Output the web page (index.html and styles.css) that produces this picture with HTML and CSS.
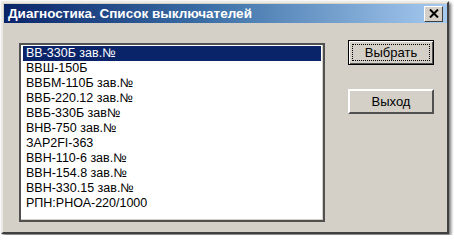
FILE: index.html
```html
<!DOCTYPE html>
<html lang="ru">
<head>
    <meta charset="UTF-8">
    <title>Диагностика. Список выключателей</title>
    <link rel="stylesheet" href="styles.css">
</head>
<body>
    <div class="window">
        <div class="titlebar">
            <span class="title">Диагностика. Список выключателей</span>
            <span class="close">
                <svg width="10" height="9" viewBox="0 0 10 9">
                    <path d="M1 0.5 L9 8.5 M9 0.5 L1 8.5" stroke="#000" stroke-width="2"/>
                </svg>
            </span>
        </div>
        <div class="content">
            <ul class="listbox">
                <li class="selected">ВВ-330Б зав.№</li>
                <li>ВВШ-150Б</li>
                <li>ВВБМ-110Б зав.№</li>
                <li>ВВБ-220.12 зав.№</li>
                <li>ВВБ-330Б зав№</li>
                <li>ВНВ-750 зав.№</li>
                <li>ЗАР2FI-363</li>
                <li>ВВН-110-6 зав.№</li>
                <li>ВВН-154.8 зав.№</li>
                <li>ВВН-330.15 зав.№</li>
                <li>РПН:РНОА-220/1000</li>
            </ul>
            <div class="buttons">
                <button class="btn default"><span class="focus">Выбрать</span></button>
                <button class="btn">Выход</button>
            </div>
        </div>
    </div>
</body>
</html>
```

FILE: styles.css
```css
body {
    margin: 0;
    background: #ffffff;
    font-family: "Liberation Sans", Arial, sans-serif;
}
.window {
    margin: 1px;
    width: 444px;
    height: 229px;
    background: #d4d0c8;
    border: 2px solid;
    border-color: #eceae4 #404040 #404040 #eceae4;
    box-shadow: 2px 2px 3px rgba(0, 0, 0, 0.55);
}
.titlebar {
    height: 19px;
    margin: 1px 0 0 1px;
    width: 443px;
    display: flex;
    align-items: center;
    justify-content: space-between;
    background: linear-gradient(to right, #0a246a, #3a6ea5 45%, #a6caf0);
}
.title {
    color: #ffffff;
    font-weight: bold;
    font-size: 13.5px;
    padding-left: 4px;
}
.close {
    width: 17px;
    height: 14px;
    margin-right: 4px;
    background: #d4d0c8;
    border: 1px solid;
    border-color: #ffffff #404040 #404040 #ffffff;
    display: flex;
    align-items: center;
    justify-content: center;
}
.content {
    display: flex;
    padding: 16px 0 0 16px;
}
.listbox {
    list-style: none;
    margin: 4px 0 0 0;
    padding: 1px 2px;
    width: 298px;
    height: 173px;
    background: #ffffff;
    border: 2px solid #505050;
    box-shadow: inset -1px -1px 0 #d4d0c8;
    font-size: 12.5px;
}
.listbox li {
    height: 15px;
    line-height: 15px;
    padding-left: 3px;
    color: #000000;
}
.listbox li.selected {
    background: #0a246a;
    color: #ffffff;
}
.buttons {
    display: flex;
    flex-direction: column;
    gap: 24px;
    margin: 1px 0 0 23px;
}
.btn {
    width: 86px;
    height: 25px;
    padding: 0;
    background: #d4d0c8;
    border: 2px solid;
    border-color: #ffffff #505050 #505050 #ffffff;
    font-family: "Liberation Sans", Arial, sans-serif;
    font-size: 13px;
    color: #000000;
}
.btn.default {
    border: 1px solid #000000;
    box-shadow: inset 1px 1px 0 #ffffff, inset -1px -1px 0 #505050;
    padding: 3px;
}
.focus {
    display: block;
    height: 15px;
    line-height: 15px;
    border: 1px dotted #000000;
}
```
